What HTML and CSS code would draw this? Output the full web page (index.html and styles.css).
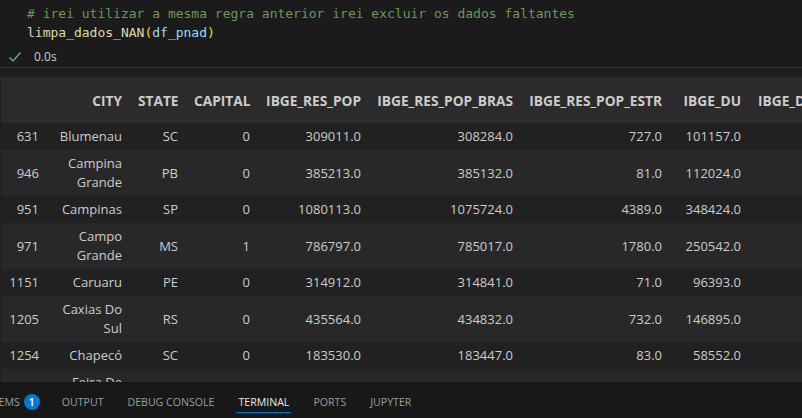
FILE: index.html
```html
<!DOCTYPE html>
<html>
<head>
<meta charset="utf-8">
<link rel="stylesheet" href="styles.css">
</head>
<body>
<div class="page">
  <div class="code">
    <div class="line"><span class="cm"># irei utilizar a mesma regra anterior irei excluir os dados faltantes</span></div>
    <div class="line"><span class="fn">limpa_dados_NAN</span><span class="br">(</span><span class="var">df_pnad</span><span class="br">)</span></div>
  </div>
  <div class="status">
    <svg class="check" width="14" height="12" viewBox="0 0 14 12"><polyline points="1.5,6.5 5,10 12.5,1.5" fill="none" stroke="#5fb063" stroke-width="1.5"/></svg>
    <span class="time">0.0s</span>
  </div>
  <div class="output">
    <table class="df">
      <colgroup>
        <col class="c-idx"><col class="c-city"><col class="c-state"><col class="c-cap"><col class="c-pop"><col class="c-bras"><col class="c-estr"><col class="c-du"><col class="c-dur">
      </colgroup>
      <thead>
        <tr><th></th><th>CITY</th><th>STATE</th><th>CAPITAL</th><th>IBGE_RES_POP</th><th>IBGE_RES_POP_BRAS</th><th>IBGE_RES_POP_ESTR</th><th>IBGE_DU</th><th class="left">IBGE_DU_URBAN</th></tr>
      </thead>
      <tbody>
        <tr><td>631</td><td>Blumenau</td><td>SC</td><td>0</td><td>309011.0</td><td>308284.0</td><td>727.0</td><td>101157.0</td><td></td></tr>
        <tr><td>946</td><td>Campina Grande</td><td>PB</td><td>0</td><td>385213.0</td><td>385132.0</td><td>81.0</td><td>112024.0</td><td></td></tr>
        <tr><td>951</td><td>Campinas</td><td>SP</td><td>0</td><td>1080113.0</td><td>1075724.0</td><td>4389.0</td><td>348424.0</td><td></td></tr>
        <tr><td>971</td><td>Campo Grande</td><td>MS</td><td>1</td><td>786797.0</td><td>785017.0</td><td>1780.0</td><td>250542.0</td><td></td></tr>
        <tr><td>1151</td><td>Caruaru</td><td>PE</td><td>0</td><td>314912.0</td><td>314841.0</td><td>71.0</td><td>96393.0</td><td></td></tr>
        <tr><td>1205</td><td>Caxias Do Sul</td><td>RS</td><td>0</td><td>435564.0</td><td>434832.0</td><td>732.0</td><td>146895.0</td><td></td></tr>
        <tr><td>1254</td><td>Chapecó</td><td>SC</td><td>0</td><td>183530.0</td><td>183447.0</td><td>83.0</td><td>58552.0</td><td></td></tr>
        <tr><td>1296</td><td>Feira De Santana</td><td>BA</td><td>0</td><td>556642.0</td><td>556470.0</td><td>172.0</td><td>168376.0</td><td></td></tr>
      </tbody>
    </table>
  </div>
  <div class="panel">
    <div class="tabs">
      <div class="tab"><span>PROBLEMS</span><span class="badge">1</span></div>
      <div class="tab">OUTPUT</div>
      <div class="tab">DEBUG CONSOLE</div>
      <div class="tab active">TERMINAL</div>
      <div class="tab">PORTS</div>
      <div class="tab">JUPYTER</div>
    </div>
  </div>
</div>
</body>
</html>
```
FILE: styles.css
```css
* { box-sizing: border-box; }
html, body { margin: 0; padding: 0; }
body {
  background: #1f1f1f;
  width: 802px;
  height: 418px;
  overflow: hidden;
}
.page {
  display: flex;
  flex-direction: column;
  height: 418px;
}
.code {
  flex: none;
  height: 46px;
  padding: 4px 0 0 27px;
  background: #1b1b1b;
  font-family: "DejaVu Sans Mono", monospace;
  font-size: 13px;
  line-height: 19px;
}
.line {
  white-space: pre;
  height: 19px;
}
.cm { color: #6a9955; }
.fn { color: #dcdcaa; }
.br { color: #ffd700; }
.var { color: #9cdcfe; }
.status {
  flex: none;
  height: 22px;
  display: flex;
  align-items: center;
  padding-left: 8px;
  background: #1b1b1b;
  border-bottom: 1px solid #333333;
}
.check { margin-right: 12px; margin-top: 1px; }
.time {
  font-family: "Open Sans", sans-serif;
  font-size: 12px;
  color: #cccccc;
}
.output {
  flex: 1;
  overflow: hidden;
  padding: 9px 0 0 1px;
  background: #1f1f1f;
}
.df {
  border-collapse: collapse;
  table-layout: fixed;
  width: 888px;
  font-family: "Open Sans", sans-serif;
  font-size: 13px;
  color: #cccccc;
}
.c-idx { width: 46px; }
.c-city { width: 83px; }
.c-state { width: 56px; }
.c-cap { width: 72px; }
.c-pop { width: 111px; }
.c-bras { width: 152px; }
.c-estr { width: 149px; }
.c-du { width: 79px; }
.c-dur { width: 140px; }
.df th, .df td {
  text-align: right;
  padding: 4px 8px;
  line-height: 19px;
  vertical-align: middle;
}
.df th {
  font-weight: 700;
  font-size: 13.7px;
  height: 46px;
  white-space: nowrap;
}
.df th.left { text-align: left; padding-left: 9px; }
.df thead tr { background: #2b2b2b; }
.df tbody tr:nth-child(odd) { background: #212121; }
.df tbody tr:nth-child(even) { background: #282828; }
.panel {
  flex: none;
  height: 36px;
  background: #181818;
  padding-top: 12px;
  overflow: hidden;
}
.tabs {
  display: flex;
  gap: 20px;
  margin-left: -37px;
  font-family: "Open Sans", sans-serif;
  font-size: 10.6px;
  color: #9d9d9d;
}
.tab {
  display: flex;
  align-items: center;
  padding: 0 2px 2px;
  line-height: 14px;
  border-bottom: 1px solid transparent;
  white-space: nowrap;
}
.tab.active {
  color: #e7e7e7;
  border-bottom-color: #0078d4;
}
.badge {
  width: 16px;
  height: 16px;
  border-radius: 50%;
  background: #0078d4;
  color: #ffffff;
  font-size: 11px;
  font-weight: 600;
  display: flex;
  align-items: center;
  justify-content: center;
  margin-left: 4px;
  margin-right: -2px;
}
```
